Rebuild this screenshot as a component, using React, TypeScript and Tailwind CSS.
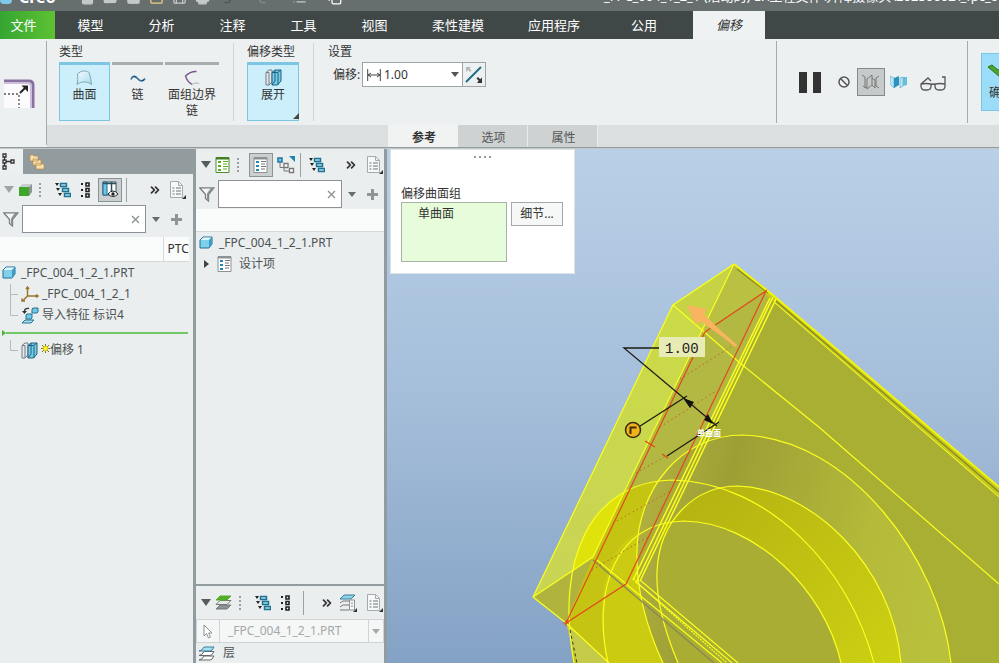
import React from "react";
import {
  ChevronsRight,
  FolderOpen,
  File,
  Save,
  Printer,
  Undo2,
  Redo2,
  Copy,
  List,
  SquareCheckBig,
} from "lucide-react";

const ribbonTabs = [
  { name: "模型", width: "w-[71px]" },
  { name: "分析", width: "w-[71px]" },
  { name: "注释", width: "w-[71px]" },
  { name: "工具", width: "w-[71px]" },
  { name: "视图", width: "w-[71px]" },
  { name: "柔性建模", width: "w-24" },
  { name: "应用程序", width: "w-24" },
  { name: "公用", width: "w-[84px]" },
];

/* ---------- icons ---------- */

const Triangle = ({ className = "" }: { className?: string }) => (
  <svg width="10" height="7" viewBox="0 0 10 7" className={`shrink-0 ${className}`}>
    <path d="M0 0h10L5 7z" fill="currentColor" />
  </svg>
);

const SmallTriangle = () => (
  <svg width="8" height="5" viewBox="0 0 8 5" className="shrink-0">
    <path d="M0 0h8L4 5z" fill="currentColor" />
  </svg>
);

const Grip = () => (
  <svg width="2" height="16" viewBox="0 0 2 16" className="shrink-0">
    <path d="M1 1v15" stroke="#9a9fa0" strokeWidth="2" strokeDasharray="2 2" />
  </svg>
);

const TreeIcon = () => (
  <svg width="16" height="16" viewBox="0 0 16 16" className="shrink-0">
    <path d="M0 1h4L2 4zM1 6h4L3 9zM3 11h4l-2 3z" fill="#222" />
    <path d="M5.5 1.500h6v3h-6zM7.500 6.500h6v3h-6zM9.500 11.500h6v3h-6z" fill="#a9dbe9" stroke="#1c7393" strokeWidth="1.500" />
  </svg>
);

const NodesIcon = () => (
  <svg width="10" height="16" viewBox="0 0 10 16" className="shrink-0">
    <path d="M0 2h2M0 8h2M0 14h2" stroke="#222" strokeWidth="2" />
    <path d="M5 1h3v3H5zM5 6.500h3v3H5zM5 12h3v3H5z" fill="#fff" stroke="#222" strokeWidth="1.600" />
  </svg>
);

const SheetIcon = () => (
  <svg width="17" height="18" viewBox="0 0 17 18" className="shrink-0">
    <path d="M1.500.5h8l4 4v12h-12z" fill="#f7f8f8" stroke="#a5a9aa" />
    <path d="M9.500.5v4h4" fill="none" stroke="#a5a9aa" />
    <path d="M3.500 7h2M7 7h5M3.500 10h2M7 10h5M3.500 13h2M7 13h5" stroke="#9ba0a1" strokeWidth="1.500" />
    <path d="M17 14v4h-4z" fill="#333" />
  </svg>
);

const ListSheet = ({ green = false }: { green?: boolean }) => (
  <svg width="16" height="16" viewBox="0 0 16 16" className="shrink-0">
    <path d="M1 .5h13v15H1z" fill="#fff" stroke={green ? "#4f8a2c" : "#8b9295"} />
    <path d="M1 1.500h13" stroke={green ? "#3f7a21" : "#8b9295"} strokeWidth="2" />
    <path d="M3 5h3M3 9h3M3 13h3" stroke={green ? "#5cae25" : "#2388b4"} strokeWidth="2.200" />
    <path d="M8 4.500h5M8 7h4M8 9.500h5M8 12h4" stroke={green ? "#5cae25" : "#777"} />
  </svg>
);

const FunnelIcon = () => (
  <svg width="16" height="15" viewBox="0 0 16 15" className="shrink-0">
    <path d="M.7.800h14.300L9.500 7.500V14L6.500 11.500v-4z" fill="#f4f6f6" stroke="#777d7f" strokeWidth="1.300" />
    <path d="M9.500 7L15 .8l-3 0L8 6.500v6l1.500 1z" fill="#8b9193" />
  </svg>
);

const PlusIcon = () => (
  <svg width="11" height="11" viewBox="0 0 11 11" className="shrink-0">
    <path d="M5.500 0v11M0 5.500h11" stroke="#8f9496" strokeWidth="3" />
  </svg>
);

const PartIcon = () => (
  <svg width="14" height="13" viewBox="0 0 14 13" className="shrink-0">
    <path d="M1 4L4 1h9v7l-3 4H1z" fill="#7fd0ec" stroke="#256f92" strokeLinejoin="round" />
    <path d="M1.500 4L4.300 1.500H12.500L10 4z" fill="#dff6fd" />
    <path d="M10 4l3-3v7l-3 4z" fill="#3b9cc4" />
  </svg>
);

const OffsetIcon = () => (
  <svg width="17" height="17" viewBox="0 0 17 17" className="shrink-0">
    <path d="M1 3.500L4 1h3v12l-3 3H1z" fill="#e4eaec" stroke="#757d80" />
    <path d="M4 3.500V16M1 3.500h3" stroke="#757d80" fill="none" />
    <path d="M7 3.500L10 1h6v11l-3.500 4H7z" fill="#76cbe6" stroke="#20607e" />
    <path d="M10 1v11l-3 4M13 3.500V16M7 3.500h5.500L16 1" stroke="#20607e" fill="none" />
  </svg>
);

const SurfaceIcon = () => (
  <svg width="17" height="16" viewBox="0 0 17 16">
    <defs>
      <linearGradient id="surf" x1="0" y1="0" x2="1" y2="1">
        <stop offset="0" stopColor="#f4fbfd" />
        <stop offset="1" stopColor="#a9dcee" />
      </linearGradient>
    </defs>
    <path d="M1.500 4C5 .5 10 0 13 2.500c1.500 4 2 8 2.500 12C12 11 5 11 1 14.500 1.800 11 2 8 1.500 4z" fill="url(#surf)" stroke="#7ba6b6" />
  </svg>
);

const ChainIcon = () => (
  <svg width="16" height="16" viewBox="0 0 16 16" fill="none">
    <path d="M1 9.500C2.500 5.500 5 5.500 7.500 8.500S13 12 15 8.500" stroke="#356f9d" strokeWidth="1.700" />
    <path d="M3.500 6.500l2 .5M12 10.500l2-.5" stroke="#153e73" />
  </svg>
);

const QuiltIcon = () => (
  <svg width="16" height="16" viewBox="0 0 16 16" fill="none">
    <path d="M12.500 1.500C8.500 1.300 4.500 3 1.500 6c1 3.500 3 6.500 6.500 8.500" stroke="#77518f" strokeWidth="1.300" />
    <path d="M8 14.500c2-1.500 4.500-2 7-1" stroke="#a6adb0" />
  </svg>
);

const RollIcon = () => (
  <svg width="34" height="31" viewBox="0 0 34 31">
    <path d="M0 2h25q4 0 4 4v23" fill="none" stroke="#8872a0" strokeWidth="3" />
    <path d="M0 4h24q3 0 3 3v22H0z" fill="#fbfafc" stroke="none" />
    <path d="M0 4h23q4 0 4 4v21" fill="none" stroke="#cdbedd" strokeWidth="2" />
    <path d="M0 15h15v14" fill="none" stroke="#555" strokeWidth="1.300" strokeDasharray="2 2" />
    <path d="M16 14l6-6" stroke="#222" strokeWidth="2" />
    <path d="M17.500 6.500H24V13z" fill="#222" />
  </svg>
);

const LayersIcon = () => (
  <svg width="17" height="15" viewBox="0 0 17 15" className="shrink-0">
    <path d="M1 14l4-4h11l-4 4z" fill="#8e9496" stroke="#777" />
    <path d="M1 9.500l4-4h11l-4 4z" fill="#e6e9e9" stroke="#777" />
    <path d="M1 5l4-4h11l-4 4z" fill="#55ad28" stroke="#55ad28" />
  </svg>
);

const ThinLayers = () => (
  <svg width="17" height="15" viewBox="0 0 17 15" className="shrink-0">
    <path d="M1 14q3 0 5-4h10q-2 4-4 4z" fill="#fff" stroke="#666" />
    <path d="M1 9.500q3 0 5-4h10q-2 4-4 4z" fill="#fff" stroke="#666" />
    <path d="M1 5q3 0 5-4h10q-2 4-4 4z" fill="#a6e0f3" stroke="#3d7f99" />
  </svg>
);

/* ---------- shared pieces ---------- */

const FilterRow = ({ label }: { label: string }) => (
  <div className="flex h-7 items-center pl-[3px]">
    <FunnelIcon />
    <div className="ml-[3px] flex h-7 w-[124px] items-center border border-[#8b9194] bg-white pr-[5px]">
      <input aria-label={label} className="w-full min-w-0 flex-1 bg-transparent px-1 outline-none" />
      <button aria-label="清除" className="text-[#8b9092]">
        <svg width="9" height="9" viewBox="0 0 9 9">
          <path d="M1 1l7 7M8 1L1 8" stroke="currentColor" strokeWidth="1.300" />
        </svg>
      </button>
    </div>
    <button aria-label="过滤选项" className="ml-[6px] text-[#666c6e]">
      <SmallTriangle />
    </button>
    <button aria-label="添加" className="ml-[11px]">
      <PlusIcon />
    </button>
  </div>
);

const TypeButton = ({
  icon,
  label,
  active = false,
  className,
}: {
  icon: React.ReactNode;
  label: string;
  active?: boolean;
  className: string;
}) => (
  <button
    className={`flex h-[59px] flex-col items-center pt-[3px] leading-4 ${
      active
        ? "border border-t-[3px] border-[#7cc6e4] bg-[#cdeffb]"
        : "border-t-[3px] border-t-[#a9adad]"
    } ${className}`}
  >
    <span className="flex h-[19px] items-center">{icon}</span>
    {label}
  </button>
);

const TitleBar = () => (
  <header className="flex h-[11px] shrink-0 items-end overflow-hidden bg-[#666e6e] text-white">
    <div className="flex h-7 w-full shrink-0 items-center whitespace-nowrap text-[#c3c9c9]">
      <span className="h-[13px] w-3 rounded-sm bg-[#7ec9ec]" />
      <span className="ml-[7px] text-base font-bold text-white">Creo</span>
      <div className="ml-[24px] flex items-center gap-2">
        <File size={15} fill="#c3c9c9" />
        <FolderOpen size={15} fill="#c3c9c9" />
        <Save size={15} fill="#c3c9c9" />
        <SquareCheckBig size={15} className="text-[#f1cf83]" />
        <Save size={15} />
        <Printer size={15} fill="#c3c9c9" />
        <Undo2 size={15} className="text-[#4d5555]" />
      </div>
      <div className="ml-6 flex items-center gap-5">
        <Redo2 size={15} className="text-[#858c8c]" />
        <List size={15} />
        <Copy size={15} className="text-white" />
      </div>
      <span className="ml-7 flex-1 text-white">×</span>
      <h1 className="w-[395px] text-[13px] text-white">
        _FPC_004_1_2_1 (活动的) E:\工程文件\升降摄像头\20250602\_fpc_0
      </h1>
    </div>
  </header>
);

const RibbonTabs = () => (
  <nav className="flex h-7 shrink-0 bg-[#3f4747] text-[13px] text-white">
    <button className="w-[55px] bg-linear-to-r from-[#35a532] to-[#5cc232] pt-[2px] pr-2">文件</button>
    {ribbonTabs.map((tab) => (
      <button key={tab.name} className={`pt-[2px] ${tab.width}`}>
        {tab.name}
      </button>
    ))}
    <button className="ml-[7px] w-[72px] bg-[#eff2f2] pt-[2px] text-[#333] italic">偏移</button>
  </nav>
);

const Ribbon = () => (
  <section className="flex h-[109px] shrink-0 overflow-hidden border-b border-[#929b9d] bg-[#edf0f0]">
    <div className="my-[2px] flex w-[47px] shrink-0 items-center border-r border-[#a5abab] pt-[2px] pl-1">
      <RollIcon />
    </div>
    <div className="flex min-w-0 flex-1 flex-col">
      <div className="flex h-[86px] shrink-0">
        <div className="my-1 w-[187px] shrink-0 border-r border-[#d0d4d4] pl-3">
          <h2 className="h-[19px] leading-[18px]">类型</h2>
          <div className="flex gap-[2px]">
            <TypeButton icon={<SurfaceIcon />} label="曲面" active className="w-[51px]" />
            <TypeButton icon={<ChainIcon />} label="链" className="w-[51px]" />
            <TypeButton icon={<QuiltIcon />} label="面组边界链" className="w-[54px]" />
          </div>
        </div>
        <div className="my-1 w-20 shrink-0 border-r border-[#d0d4d4] pl-[13px]">
          <h2 className="h-[19px] leading-[18px]">偏移类型</h2>
          <div className="relative w-[52px]">
            <TypeButton icon={<OffsetIcon />} label="展开" active className="w-[52px]" />
            <svg width="6" height="6" className="absolute right-0 bottom-[2px]">
              <path d="M6 0v6H0z" fill="#444" />
            </svg>
          </div>
        </div>
        <div className="my-1 shrink-0 pl-[14px]">
          <h2 className="h-[19px] leading-[18px]">设置</h2>
          <div className="flex items-center pl-[5px]">
            <label htmlFor="offset" className="w-[29px] whitespace-nowrap">
              偏移:
            </label>
            <div className="flex h-[25px] w-[101px] items-center border border-[#9fa5a6] bg-white pr-[3px] pl-1">
              <svg width="14" height="14" viewBox="0 0 14 14" className="shrink-0">
                <path d="M.7 1v12M13.300 1v12M1 7h12M4 5L1 7l3 2M10 5l3 2-3 2" stroke="#444" fill="none" />
              </svg>
              <input id="offset" defaultValue="1.00" className="w-full min-w-0 flex-1 pl-[3px] outline-none" />
              <button aria-label="最近使用的值" className="text-[#555]">
                <SmallTriangle />
              </button>
            </div>
            <button
              aria-label="反向"
              className="-ml-px flex h-[25px] w-6 items-center justify-center border border-[#9fa5a6]"
            >
              <svg width="18" height="18" viewBox="0 0 18 18" className="shrink-0">
                <path d="M1 16L16 1" stroke="#1f6e86" strokeWidth="2" />
                <path d="M1 1h5L4.500 2.500 6.500 4.500 5 6 3 4 1 6z" fill="#b4babb" />
                <path d="M17 17v-5.500L15.200 13.300 13 11l-1.500 1.500 2.200 2.200L12 17z" fill="#333" />
              </svg>
            </button>
          </div>
        </div>
        <div className="my-[2px] ml-auto flex w-[223px] shrink-0 items-center border-l border-[#a5abab]">
          <button aria-label="暂停" className="ml-[22px] shrink-0">
            <svg width="22" height="21">
              <path d="M0 0h8v21H0zM14 0h8v21h-8z" fill="#333" />
            </svg>
          </button>
          <button aria-label="无预览" className="ml-[17px] shrink-0">
            <svg width="12" height="12" viewBox="0 0 12 12" fill="none" stroke="#555" strokeWidth="1.500">
              <circle cx="6" cy="6" r="5" />
              <path d="M2.500 2.500l7 7" />
            </svg>
          </button>
          <button
            aria-label="分离预览"
            className="ml-[7px] flex h-7 w-7 shrink-0 items-center justify-center border border-[#888] bg-[#c6caca]"
          >
            <svg width="20" height="16" viewBox="0 0 20 16" fill="none" stroke="#777">
              <path d="M1 1l3 2v11M2 12l3 2 1-1M6 5l5-4v10l-5 4zM11 4l3 2v8l-3-3M18 2l-3 2v8M15 12l3 2" />
            </svg>
          </button>
          <button aria-label="连接预览" className="ml-[5px] shrink-0">
            <svg width="18" height="14" viewBox="0 0 18 14">
              <path d="M0 1l4 2v10L0 9zM10 3l3-1v9l-3 2z" fill="#b7e7f6" stroke="#5aa3be" strokeWidth=".6" />
              <path d="M4 3l5-2v9l-5 3z" fill="#2a93bd" />
              <path d="M13 2h4v8l-4 1z" fill="#68bedb" />
            </svg>
          </button>
          <button aria-label="校验几何" className="ml-3 shrink-0 pt-[3px]">
            <svg width="26" height="15" viewBox="0 0 26 15" fill="none" stroke="#555" strokeWidth="1.300">
              <path d="M1 8q5-1 10 0v2q0 4-4 4H5q-4 0-4-4zM15 8q5-1 10 0v2q0 4-4 4h-2q-4 0-4-4zM11 9q2-2 4 0M1 8l7-6 3 3M25 8V1l-3 0" />
            </svg>
          </button>
          <div className="ml-[21px] flex h-full shrink-0 items-center border-l border-[#a5abab] pl-[13px]">
            <button className="flex h-[58px] w-[46px] shrink-0 flex-col items-start justify-center gap-[6px] border border-[#7cc6e4] bg-[#9bdcf8] pl-[6px]">
              <svg width="26" height="16" viewBox="0 0 26 16">
                <path d="M0 4l4-2 6 5L22 0l3 2-13 12z" fill="#4aa72c" stroke="#2d6f1e" />
              </svg>
              <span className="pl-[1px] leading-4 whitespace-nowrap">确定</span>
            </button>
          </div>
        </div>
      </div>
      <div className="flex flex-1 bg-[#dcdfdf] pl-[341px] text-[#555]">
        <button className="w-[70px] bg-[#f1f3f3] pt-[3px] pl-[2px] font-bold text-[#333]">参考</button>
        <button className="w-[70px] border-r border-[#e9ebeb] bg-[#cfd2d2] pt-[3px] pl-[2px]">选项</button>
        <button className="w-[70px] border-r border-[#e9ebeb] bg-[#cfd2d2] pt-[3px] pl-[2px]">属性</button>
      </div>
    </div>
  </section>
);

const ModelTree = () => (
  <aside className="flex w-[196px] shrink-0 flex-col border-r-[3px] border-[#929c9f]">
    <div className="flex h-[25px] shrink-0 bg-[#929c9f]">
      <button aria-label="模型树" className="w-[23px] bg-[#edf0f0] pl-[2px]">
        <svg width="13" height="17" viewBox="0 0 13 17" fill="none" stroke="#333" strokeWidth="1.300">
          <path d="M1 1h3v3H1zM1 7h3v3H1zM1 13h3v3H1zM9 7h3v3H9zM4 8.500h5M2.500 4v3M2.500 10v3" />
        </svg>
      </button>
      <button aria-label="文件夹浏览器" className="pl-[6px]">
        <svg width="16" height="16" viewBox="0 0 16 16" fill="#f7dfae" stroke="#b98d46" strokeWidth=".7">
          <path d="M1 1h3l1 1h4v5H1zM4 5h3l1 1h4v5H4zM7 9h3l1 1h4v5H7z" />
        </svg>
      </button>
    </div>
    <div className="flex h-[31px] shrink-0 items-center pl-1">
      <Triangle className="text-[#a0a5a7]" />
      <svg width="14" height="14" viewBox="0 0 14 14" className="ml-[5px] shrink-0">
        <path d="M1 4l3-3h9v8l-3 4z" fill="#8e9597" />
        <path d="M1 4l3-3h9l-3 3z" fill="#c8cdce" />
        <path d="M0 4h10v9H0z" fill="#3fa62a" />
      </svg>
      <span className="ml-[6px] flex"><Grip /></span>
      <span className="ml-[14px] flex"><TreeIcon /></span>
      <span className="ml-[10px] flex"><NodesIcon /></span>
      <button
        aria-label="树列"
        className="ml-[7px] flex h-6 w-6 shrink-0 items-center justify-center border border-[#8d9395] bg-[#cbcfd0]"
      >
        <svg width="17" height="17" viewBox="0 0 17 17">
          <path d="M1 1h13v13H1z" fill="#fff" stroke="#31505e" />
          <path d="M1 1h4v13H1z" fill="#6fc5e7" stroke="#1c6d91" />
          <path d="M1 2.500h13M9.500 1v13" stroke="#31505e" strokeWidth="1.500" />
          <path d="M6 13q5-6 10 0-5 5-10 0z" fill="#fff" stroke="#222" />
          <circle cx="11" cy="13" r="1.700" fill="#222" />
        </svg>
      </button>
      <span className="ml-1 h-6 w-px bg-[#9ba1a3]" />
      <ChevronsRight size={14} strokeWidth={3} className="ml-[21px] text-[#333]" />
      <span className="ml-[7px] flex"><SheetIcon /></span>
    </div>
    <FilterRow label="过滤模型树" />
    <table className="mt-1 mr-1 border-collapse text-left">
      <thead>
        <tr className="h-6 border-b border-[#d5d9d9] bg-[#fafbfb]">
          <th aria-label="名称" />
          <th className="w-[26px] border-l border-[#d5d9d9] pl-1 font-normal">PTC</th>
        </tr>
      </thead>
    </table>
    <ul className="mr-[5px] text-[#4c5254]">
      <li className="flex h-[22px] items-center gap-[5px] pl-[2px]">
        <PartIcon /> _FPC_004_1_2_1.PRT
      </li>
      <li className="flex h-[21px] items-center pl-[10px]">
        <svg width="9" height="21" className="shrink-0" fill="none" stroke="#b5baba">
          <path d="M.5 0v21M0 10.500h8" />
        </svg>
        <svg width="18" height="16" viewBox="0 0 18 16" className="mr-[3px] ml-[2px] shrink-0" fill="none" stroke="#9a772a" strokeWidth="1.500">
          <path d="M6.500 2v8h10M6.500 10l-5 5M5 3l1.500-2L8 3M15 8.500l2 1.500-2 1.500M1 12.500V15h3" />
        </svg>
        _FPC_004_1_2_1
      </li>
      <li className="flex h-[21px] items-center pl-[10px]">
        <svg width="9" height="21" className="shrink-0" fill="none" stroke="#b5baba">
          <path d="M.5 0v10.500H8" />
        </svg>
        <svg width="18" height="17" viewBox="0 0 18 17" className="mr-[3px] ml-[2px] shrink-0">
          <path d="M11 2l1-1h5v4l-1 1h-5zM5 8l1-1h5v4l-1 1H5z" fill="#73c8e8" stroke="#27708f" />
          <path d="M1 16l3-3h9l-3 3z" fill="#a5dff1" stroke="#27708f" />
          <path d="M8 1.500Q3 1 3.500 5" stroke="#333" fill="none" strokeWidth="1.300" />
          <path d="M1 4h5L3.500 7z" fill="#333" />
        </svg>
        导入特征 标识4
      </li>
      <li className="flex h-[14px] items-center pl-[2px]">
        <svg width="4" height="6">
          <path d="M0 0l4 3-4 3z" fill="#4bb339" />
        </svg>
        <span className="h-[2px] flex-1 bg-[#71c765]" />
      </li>
      <li className="flex h-[21px] items-center pl-[10px]">
        <svg width="9" height="21" className="shrink-0" fill="none" stroke="#b5baba">
          <path d="M.5 0v10.500H8" />
        </svg>
        <span className="ml-[2px] flex"><OffsetIcon /></span>
        <svg width="9" height="9" viewBox="0 0 9 9" className="mb-1 ml-[3px] shrink-0" stroke="#7d7414">
          <path d="M4.500 0v9M0 4.500h9M1 1l7 7M8 1L1 8" />
          <circle cx="4.500" cy="4.500" r="2.300" fill="#fff133" stroke="#e2cf15" />
        </svg>
        偏移 1
      </li>
    </ul>
  </aside>
);

const DesignTree = () => (
  <aside className="flex w-[191px] shrink-0 flex-col border-r-[3px] border-[#929c9f]">
    <div className="flex h-[31px] shrink-0 items-center pl-[5px]">
      <Triangle className="text-[#565c5e]" />
      <span className="ml-1 flex"><ListSheet green /></span>
      <span className="ml-[6px] flex"><Grip /></span>
      <button
        aria-label="设计树"
        className="ml-[10px] flex h-6 w-6 shrink-0 items-center justify-center border border-[#8d9395] bg-[#cbcfd0]"
      >
        <ListSheet />
      </button>
      <svg width="18" height="18" viewBox="0 0 18 18" className="ml-1 shrink-0">
        <path d="M3 7v4.500h4M7 11.500V15h5" stroke="#777" fill="none" />
        <path d="M1 2h4v4H1z" fill="#7bc9e8" stroke="#1e749a" strokeWidth="1.500" />
        <path d="M7 7.500h4v4H7zM12.500 12.500h4v4h-4z" fill="#fff" stroke="#777" strokeWidth="1.300" />
        <path d="M12 0h6v6z" fill="#1e81b4" />
      </svg>
      <span className="ml-[5px] h-6 w-px bg-[#9ba1a3]" />
      <span className="ml-2 flex"><TreeIcon /></span>
      <ChevronsRight size={14} strokeWidth={3} className="ml-[19px] text-[#333]" />
      <span className="ml-2 flex"><SheetIcon /></span>
    </div>
    <FilterRow label="过滤设计树" />
    <div className="mt-px h-[23px] shrink-0 border-b border-[#d5d9d9] bg-[#fafbfb]" />
    <ul className="flex-1 text-[#4c5254]">
      <li className="flex h-[21px] items-center gap-[6px] pl-[3px]">
        <PartIcon /> _FPC_004_1_2_1.PRT
      </li>
      <li className="flex h-[22px] items-center gap-[6px] pl-2">
        <svg width="5" height="8" className="mr-[2px]">
          <path d="M0 0l5 4-5 4z" fill="#444" />
        </svg>
        <ListSheet /> 设计项
      </li>
    </ul>
    <section className="h-[79px] shrink-0 border-t-2 border-[#929c9f]">
      <div className="flex h-[33px] items-center pl-[5px]">
        <Triangle className="text-[#565c5e]" />
        <span className="ml-1 flex"><LayersIcon /></span>
        <span className="ml-[7px] flex"><Grip /></span>
        <span className="ml-[14px] flex"><TreeIcon /></span>
        <span className="ml-[10px] flex"><NodesIcon /></span>
        <span className="ml-3 h-6 w-px bg-[#9ba1a3]" />
        <ChevronsRight size={14} strokeWidth={3} className="ml-4 text-[#333]" />
        <svg width="18" height="18" viewBox="0 0 18 18" className="ml-[5px] shrink-0">
          <path d="M1 5l4-4h11l-4 4z" fill="#8cd3ea" stroke="#3d7f99" />
          <path d="M1 9l3-2h7M1 13l3-2h7M1 16h9" fill="none" stroke="#777" />
          <path d="M10.500 6h5v10h-5z" fill="#f7f8f8" stroke="#8d9294" />
          <path d="M12 9h2M12 12h2" stroke="#888" />
          <path d="M18 14v4h-4z" fill="#333" />
        </svg>
        <span className="ml-[9px] flex"><SheetIcon /></span>
      </div>
      <div className="flex h-6 items-center border border-[#d0d4d4] bg-[#f5f7f7] text-[#a3a8a9]">
        <span className="flex h-full w-[23px] items-center justify-center border-r border-[#d0d4d4]">
          <svg width="10" height="15" viewBox="0 0 10 15" fill="#fff" stroke="#8c9193">
            <path d="M1 1v11l2.500-2.500L5.500 14l2-1-2-4H9z" />
          </svg>
        </span>
        <select
          aria-label="活动层对象"
          className="h-full min-w-0 flex-1 appearance-none border-r border-[#d0d4d4] px-2 outline-none"
        >
          <option>_FPC_004_1_2_1.PRT</option>
        </select>
        <span className="flex w-[14px] justify-center">
          <SmallTriangle />
        </span>
      </div>
      <div className="flex h-5 items-center gap-2 pl-[2px] text-[#4c5254]">
        <ThinLayers /> 层
      </div>
    </section>
  </aside>
);

const ARC_1 = "M663 663C643 620 636 585 637 550C638 490 680 435 743 435C850 438 940 560 951 663";
const ARC_2 = "M678 663C662 625 656 595 657 572C659 520 695 486 738 486C810 488 893 565 901 663";
const ARC_3 = "M574 663C555 560 590 482 672 480C770 482 850 570 874 663";
const ARC_4 = "M608 663C592 590 615 522 684 521C755 522 825 590 841 663";

const ModelView = () => (
  <svg
    className="absolute inset-0 h-full w-full"
    viewBox="387 149 612 514"
    preserveAspectRatio="xMinYMin slice"
    fill="none"
  >
    <defs>
      <linearGradient id="bore" x1="637" y1="520" x2="940" y2="600" gradientUnits="userSpaceOnUse">
        <stop offset="0" stopColor="#b1b03f" />
        <stop offset=".25" stopColor="#9d9f35" />
        <stop offset=".75" stopColor="#b5bb39" />
        <stop offset="1" stopColor="#b9c03c" />
      </linearGradient>
      <linearGradient id="ring" x1="720" y1="490" x2="880" y2="663" gradientUnits="userSpaceOnUse">
        <stop offset="0" stopColor="#b6b512" />
        <stop offset="1" stopColor="#cbcf12" />
      </linearGradient>
      <linearGradient id="side" x1="720" y1="280" x2="560" y2="600" gradientUnits="userSpaceOnUse">
        <stop offset="0" stopColor="#cbdb45" />
        <stop offset="1" stopColor="#c9d456" />
      </linearGradient>
      <clipPath id="outer">
        <path d="M673 305L734 264L593 557L533 597z" />
      </clipPath>
    </defs>

    {/* body faces */}
    <path d="M734 264L774 296L999 487V663H577L566 623L593 557z" fill="#b3b842" />
    <path d="M774 297L999 490V663H704L636 582z" fill="#a9af33" />
    <path d="M636 582L704 663H663C643 620 636 600 636 582z" fill="#abae36" />
    <path d="M533 597L593 557L650 663H609L566 623z" fill="#aeb139" />
    <path d={ARC_1} fill="url(#bore)" />
    <path d="M574 663C555 560 590 482 672 480L659 480C645 500 637 522 637 550C636 585 643 620 663 663z" fill="#c5c412" />
    <path d="M608 663C592 590 610 545 637 533C635 590 643 620 663 663z" fill="#cbcc12" />
    <path d={ARC_2} fill="#a9ad33" />
    <path d="M657 572C659 520 695 486 738 486C810 488 893 565 901 663H841C825 590 755 522 684 521C674 521 668 522 663 523z" fill="url(#ring)" />
    <path d="M673 305L734 264L593 557L533 597z" fill="url(#side)" />
    <path d={ARC_3} fill="#dfe20b" clipPath="url(#outer)" />
    <path d="M533 597L593 557L566 623z" fill="#b0b43c" />
    <path d="M566 623L609 663H577z" fill="#c5cb48" />
    <path d="M734 264L673 305L705 332L766 291z" fill="#c0ca43" fillOpacity=".45" />

    {/* top right edge band */}
    <path d="M734 264L774 296L999 487V497L774 302z" fill="#c7cb1c" />
    <path d="M737 269L768 293M776 301L999 492" stroke="#8a8a27" strokeWidth="1.500" />
    <path d="M734 264L774 296L999 487" stroke="#f2f50b" strokeWidth="2" />
    <path d="M774 302L999 497" stroke="#fbff26" />

    {/* edges */}
    <g stroke="#fbff1e" strokeWidth="1.200">
      <path d={ARC_1} />
      <path d={ARC_2} />
      <path d={ARC_3} />
      <path d={ARC_4} />
      <path d="M734 264L673 305L533 597L566 623L609 663M533 597L593 557L734 264" />
      <path d="M673 305L740 363L820 428L999 584" />
      <path d="M770 298L633 580M773 297L636 583M776 299L640 581" strokeWidth="1.500" />
      <path d="M597 560L722 663M636 582L732 663M640 580L738 663" />
      <path d="M633 579L727 663" strokeDasharray="2 1" />
    </g>
    <path d="M593 560L714 663" stroke="#8c8a55" strokeWidth="1.500" />
    <path d="M570 630L577 663" stroke="#333" strokeDasharray="3 3" />

    {/* selected surface */}
    <path d="M766 291L705 332L566 623L626 584z" stroke="#e04a1c" strokeWidth="1.200" />
    <path d="M645 441L655 447M662 454L668 458" stroke="#e04a1c" strokeWidth="1.300" />
    <path
      d="M680 379L737 343M660 427L716 391M636 473L666 456M613 523L672 490M592 570L648 537"
      stroke="#c0602a"
      strokeDasharray="1.500 3"
    />
    <path d="M566 620v6M563 623h6" stroke="#e04a1c" />

    {/* direction arrow */}
    <path d="M687 305L707 309L704 314L738 348L700 321L695 324z" fill="#f8b45e" />
    <path d="M698 313L736 346" stroke="#f8b45e" strokeWidth="3" />

    {/* offset dimension */}
    <path d="M660 348H624L717 426M637 428L687 396M667 456L719 422" stroke="#1d1d12" strokeWidth="1.300" />
    <path d="M683 398L694 402L690 408zM713 424L704 420L708 414z" fill="#111" />
    <circle cx="633" cy="430" r="7.500" fill="#f2b21c" stroke="#3b2c0b" strokeWidth="1.500" />
    <path d="M630.500 434v-6.500h6" stroke="#3b2c0b" strokeWidth="2" />
    <rect x="659" y="337" width="46" height="20" fill="#e8ebb4" />
    <text x="665" y="353" fontSize="14" fontFamily="'Liberation Mono', monospace" fill="#222">
      1.00
    </text>
    <text x="697" y="436" fontSize="8" fontWeight="700" fontFamily="'Noto Sans CJK SC', sans-serif" fill="#fff">
      单曲面
    </text>
  </svg>
);

const ReferencePanel = () => (
  <section className="relative ml-[3px] h-[125px] w-[185px] border border-[#dfe3e6] bg-white pt-[6px] pl-[10px]">
    <div className="flex justify-center gap-[3px] pr-[10px]">
      {[0, 1, 2, 3].map((dot) => (
        <span key={dot} className="h-[2px] w-[2px] bg-[#999]" />
      ))}
    </div>
    <h2 className="mt-7 h-4 leading-4">偏移曲面组</h2>
    <div className="flex items-start gap-1">
      <ul className="h-[60px] w-[106px] border border-[#a9b1a4] bg-[#e6fcda] pl-4 leading-[21px]">
        <li>单曲面</li>
      </ul>
      <button className="h-6 w-[52px] border border-[#a4a8a8] bg-[#f6f7f7]">细节...</button>
    </div>
  </section>
);

const App = () => (
  <div className="flex h-screen flex-col overflow-hidden bg-[#ebeeee] font-['Noto_Sans','Noto_Sans_CJK_SC',sans-serif] text-xs text-[#333]">
    <TitleBar />
    <RibbonTabs />
    <Ribbon />
    <main className="flex min-h-0 flex-1 border-t border-[#c3c8c9]">
      <ModelTree />
      <DesignTree />
      <div className="relative min-w-0 flex-1 bg-linear-to-b from-[#b9d0e7] via-[#a4bdd9] to-[#84a2c5]">
        <ModelView />
        <ReferencePanel />
      </div>
    </main>
  </div>
);

export default App;
